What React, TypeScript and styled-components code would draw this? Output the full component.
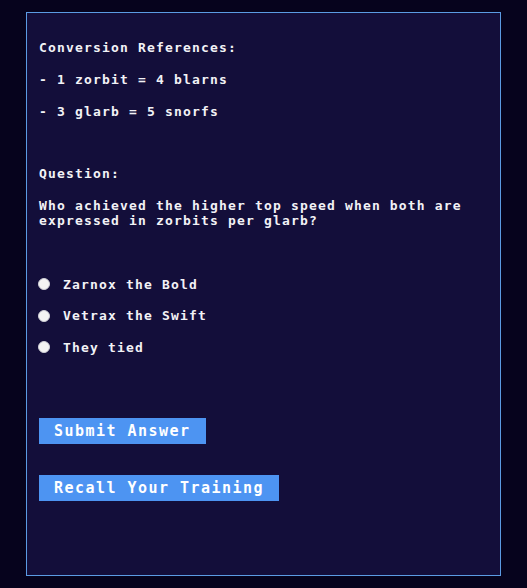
import styled, { createGlobalStyle } from 'styled-components'

const GlobalStyle = createGlobalStyle`
  html, body {
    margin: 0;
    padding: 0;
    background: #06031d;
  }
  body {
    font-family: "DejaVu Sans Mono", "Liberation Mono", monospace;
    color: #f2f2f6;
  }
`

const Page = styled.div`
  min-height: 588px;
  padding: 12px 26px 13px;
  box-sizing: border-box;
`

const Panel = styled.div`
  height: 564px;
  box-sizing: border-box;
  border: 1px solid #5b9be3;
  background: #130e3a;
  padding: 13px 12px 12px;
  display: flex;
  flex-direction: column;
`

const Line = styled.p<{ $top?: number }>`
  margin: ${p => p.$top ?? 0}px 0 16px;
  font-size: 13px;
  font-weight: bold;
  letter-spacing: 1.17px;
  line-height: 16px;
  white-space: pre;
`

const QuestionText = styled.p`
  margin: 0;
  font-size: 13px;
  font-weight: bold;
  letter-spacing: 1.17px;
  line-height: 15px;
  max-width: 440px;
`

const Options = styled.div`
  margin-top: 46px;
  display: flex;
  flex-direction: column;
  gap: 11.5px;
`

const Option = styled.label`
  display: flex;
  align-items: center;
  height: 20px;
  font-size: 13px;
  font-weight: bold;
  letter-spacing: 1.17px;
  cursor: pointer;
`

const Radio = styled.input`
  appearance: none;
  width: 12px;
  height: 12px;
  margin: 0 13px 0 -1px;
  border-radius: 50%;
  background: #f4f4f4;
  border: 1px solid #cfcfd6;
  box-sizing: border-box;
`

const Actions = styled.div`
  margin-top: 61px;
  display: flex;
  flex-direction: column;
  align-items: flex-start;
  gap: 31px;
`

const ActionButton = styled.button`
  height: 26px;
  padding: 0 15px;
  border: none;
  background: #4d94f2;
  color: #ffffff;
  font-family: "DejaVu Sans Mono", "Liberation Mono", monospace;
  font-size: 15px;
  font-weight: bold;
  letter-spacing: 1.47px;
  cursor: pointer;
`

const options = ['Zarnox the Bold', 'Vetrax the Swift', 'They tied']

export default function App() {
  return (
    <>
      <GlobalStyle />
      <Page>
        <Panel>
          <Line $top={14}>Conversion References:</Line>
          <Line>- 1 zorbit = 4 blarns</Line>
          <Line>- 3 glarb = 5 snorfs</Line>
          <Line $top={30}>Question:</Line>
          <QuestionText>
            Who achieved the higher top speed when both are expressed in zorbits per glarb?
          </QuestionText>
          <Options>
            {options.map(o => (
              <Option key={o}>
                <Radio type="radio" name="answer" value={o} />
                {o}
              </Option>
            ))}
          </Options>
          <Actions>
            <ActionButton>Submit Answer</ActionButton>
            <ActionButton>Recall Your Training</ActionButton>
          </Actions>
        </Panel>
      </Page>
    </>
  )
}
